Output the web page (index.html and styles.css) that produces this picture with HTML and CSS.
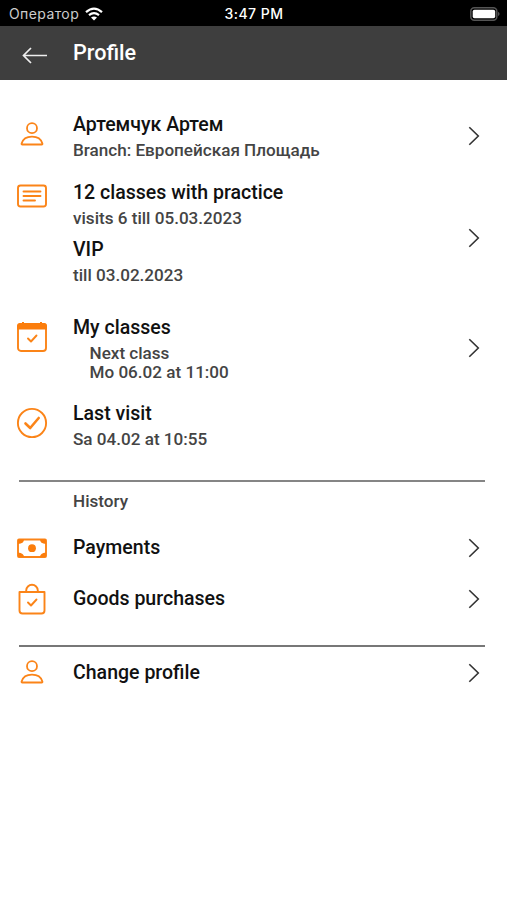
FILE: index.html
```html
<!DOCTYPE html>
<html lang="en">
<head>
    <meta charset="utf-8">
    <title>Profile</title>
    <link rel="stylesheet" href="styles.css">
</head>
<body>
    <!-- shared icons -->
    <svg class="sprite" width="0" height="0">
        <symbol id="person" viewBox="0 0 24 24">
            <circle cx="12" cy="6.2" r="5"/>
            <path d="M2.300 22.500h19.400q1 0 .7-1C21 16.800 17 14.700 12 14.700S3 16.800 1.600 21.500q-.3 1 .7 1z"/>
        </symbol>
        <symbol id="chevron" viewBox="0 0 12 20">
            <path d="M1.300 1.200L10.300 10L1.300 18.800"/>
        </symbol>
    </svg>

    <div class="status">
        <div class="carrier">
            <span>Оператор</span>
            <svg width="18" height="14" viewBox="0 0 18 14">
                <path class="wave" d="M1 5.100Q9-2 17 5.100M4 8.200Q9 4 14 8.200"/>
                <path class="dot" d="M9 13.500L6 10.600Q9 8.300 12 10.600z"/>
            </svg>
        </div>
        <div class="clock">3:47 PM</div>
        <svg class="battery" width="30" height="14" viewBox="0 0 30 14">
            <rect class="case" x=".8" y=".8" width="26" height="12.400" rx="3.500"/>
            <rect class="charge" x="2.700" y="2.700" width="22.500" height="8.600" rx="1.800"/>
            <path class="cap" d="M28.200 4.800q2.600 2.200 0 4.400z"/>
        </svg>
    </div>

    <div class="header">
        <svg class="back" width="26" height="17" viewBox="0 0 26 17">
            <path d="M25 8.500H1.500M9 1L1.500 8.500L9 16"/>
        </svg>
        <h1>Profile</h1>
    </div>

    <div class="content">
        <div class="row user">
            <svg class="icon small"><use href="#person"/></svg>
            <div class="text">
                <h2>Артемчук Артем</h2>
                <p>Branch: Европейская Площадь</p>
            </div>
            <svg class="chevron"><use href="#chevron"/></svg>
        </div>

        <div class="row passes">
            <svg class="icon" viewBox="0 0 32 32">
                <rect x="2" y="5.500" width="28" height="21" rx="2.500"/>
                <path d="M7.500 11.500h17M7.500 16h17M7.500 20.500h11.500"/>
            </svg>
            <div class="text">
                <h2>12 classes with practice</h2>
                <p>visits 6 till 05.03.2023</p>
                <h2 class="second">VIP</h2>
                <p>till 03.02.2023</p>
            </div>
            <svg class="chevron"><use href="#chevron"/></svg>
        </div>

        <div class="row classes">
            <svg class="icon" viewBox="0 0 32 32">
                <rect x="2" y="3" width="28" height="27" rx="3"/>
                <path class="solid" d="M1 8.500V5q0-3 3-3h2V1h2v1h16V1h2v1h2q3 0 3 3v3.500z"/>
                <path d="M12 17.500l3 3l5.500-6"/>
            </svg>
            <div class="text">
                <h2>My classes</h2>
                <p class="next">Next class<br>Mo 06.02 at 11:00</p>
            </div>
            <svg class="chevron"><use href="#chevron"/></svg>
        </div>

        <div class="row visit">
            <svg class="icon" viewBox="0 0 32 32">
                <circle cx="16" cy="16" r="14.100"/>
                <path class="bold" d="M9.500 16.500l4.700 4.500l8.500-10"/>
            </svg>
            <div class="text">
                <h2>Last visit</h2>
                <p>Sa 04.02 at 10:55</p>
            </div>
        </div>

        <hr>
        <p class="label">History</p>

        <div class="row payments">
            <svg class="icon" viewBox="0 0 32 32">
                <rect x="2" y="7.500" width="28" height="17.500" rx="1"/>
                <path class="solid" d="M2 7.500h6q0 4-6 4.500zM30 7.500h-6q0 4 6 4.500zM2 25h6q0-4-6-4.500zM30 25h-6q0-4 6-4.500z"/>
                <circle class="solid" cx="16" cy="16.200" r="3.900"/>
            </svg>
            <div class="text"><h2>Payments</h2></div>
            <svg class="chevron"><use href="#chevron"/></svg>
        </div>

        <div class="row goods">
            <svg class="icon" viewBox="0 0 32 32">
                <path d="M3.500 9h25v18.500q0 3-3 3h-19q-3 0-3-3zM10.200 9V7.500a5.800 5.700 0 0 1 11.600 0V9"/>
                <path d="M12 19.500l3 3l5.500-6"/>
            </svg>
            <div class="text"><h2>Goods purchases</h2></div>
            <svg class="chevron"><use href="#chevron"/></svg>
        </div>

        <hr>

        <div class="row change">
            <svg class="icon small"><use href="#person"/></svg>
            <div class="text"><h2>Change profile</h2></div>
            <svg class="chevron"><use href="#chevron"/></svg>
        </div>
    </div>
</body>
</html>
```
FILE: styles.css
```css
body {
    margin: 0;
    background: #fff;
    color: #111;
    font-family: Roboto, "Liberation Sans", sans-serif;
}

h1, h2, p {
    margin: 0;
    font-weight: 500;
}

svg {
    display: block;
    fill: none;
}

.sprite {
    display: none;
}

.status {
    display: grid;
    grid-template-columns: 1fr auto 1fr;
    align-items: center;
    height: 26px;
    padding: 1px 7px 0 9px;
    box-sizing: border-box;
    background: #000;
    color: #fff;
    font-family: Inter, sans-serif;
    font-size: 14px;
}

.carrier {
    display: flex;
    gap: 6px;
    align-items: center;
    color: #ccc;
    letter-spacing: 0.4px;
}

.wave {
    stroke: #fff;
    stroke-width: 2.2;
}

.dot, .charge {
    fill: #fff;
}

.clock {
    margin-right: 1px;
    font-weight: 500;
    letter-spacing: 0.5px;
}

.battery {
    justify-self: end;
}

.case {
    stroke: #555;
    stroke-width: 1.5;
}

.cap {
    fill: #666;
}

.header {
    display: flex;
    align-items: center;
    box-sizing: border-box;
    height: 54px;
    padding-left: 22px;
    background: #3e3e3e;
    color: #fff;
}

.header h1 {
    margin-left: 25px;
    font-size: 21.6px;
    line-height: 54px;
}

.back {
    margin-top: 5px;
    stroke: #eee;
    stroke-width: 1.7;
}

.content {
    padding: 32px 27px 0 16px;
}

.row {
    display: flex;
    align-items: center;
}

.text {
    flex: 1;
}

h2 {
    font-size: 19.55px;
    line-height: 26px;
}

p {
    padding-bottom: 2px;
    color: #444;
    font-size: 17.1px;
    line-height: 24px;
}

.icon {
    align-self: flex-start;
    width: 32px;
    height: 32px;
    margin: 0 25.5px 0 -0.5px;
    stroke: #fb8418;
    stroke-width: 1.9;
    stroke-linecap: round;
    stroke-linejoin: round;
}

.icon.small {
    width: 24px;
    height: 24px;
    margin: 0 29.5px 0 3.5px;
    stroke-width: 1.8;
}

.user .icon.small {
    margin-top: 10px;
}

.solid {
    fill: #fb7d0c;
    stroke: none;
}

.bold {
    stroke-width: 2.6;
}

.chevron {
    width: 12px;
    height: 20px;
    margin-bottom: 1px;
    stroke: #333;
    stroke-width: 1.6;
}

.user .chevron {
    margin-bottom: 4px;
}

.passes {
    margin-top: 16px;
    padding-bottom: 9px;
}

.passes .chevron {
    margin-top: 8px;
}

.second {
    margin-top: 5px;
}

.classes {
    margin-top: 17px;
}

.classes .icon {
    margin-top: 6px;
}

.next {
    padding: 3px 0 1px 16.500px;
    line-height: 18.5px;
}

.visit {
    margin-top: 19px;
}

.visit .icon {
    margin-top: 6px;
}

hr {
    height: 2px;
    margin: 27px -5px 0 3px;
    border: 0;
    background: #858585;
}

.label {
    margin: 7px 0 0 57px;
}

.payments {
    margin-top: 17px;
}

.goods {
    margin-top: 19px;
}

.payments .icon, .goods .icon {
    align-self: center;
}

.goods + hr {
    margin-top: 30px;
    background: #777;
}

.change {
    margin-top: 13px;
}
```
